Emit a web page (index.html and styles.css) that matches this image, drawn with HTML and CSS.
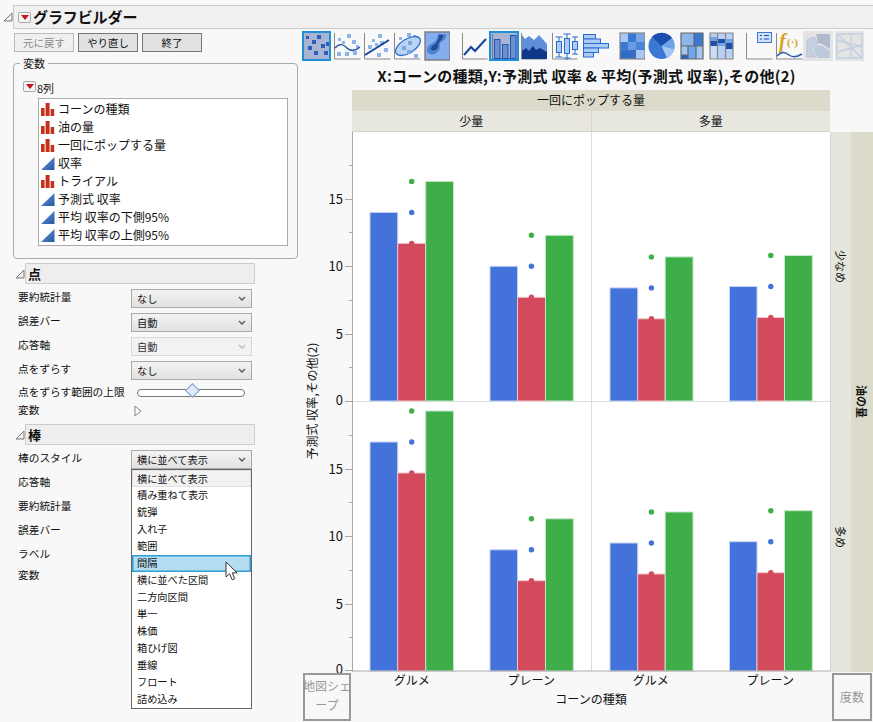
FILE: index.html
```html
<!DOCTYPE html>
<html lang="ja">
<head>
<meta charset="utf-8">
<title>グラフビルダー</title>
<link rel="stylesheet" href="styles.css">
</head>
<body>
<svg class="defs" width="0" height="0" aria-hidden="true">
  <defs>
    <linearGradient id="tri" x1="0" y1="0" x2="1" y2="1"><stop offset="0" stop-color="#6f9ddf"/><stop offset="1" stop-color="#23569f"/></linearGradient>
    <symbol id="nom" viewBox="0 0 14 13"><path d="M0 5h3.600v8H0zM4.600 0h4v13h-4zM9.600 6h3.600v7H9.600z" fill="#c5301a"/></symbol>
    <symbol id="con" viewBox="0 0 14 13"><path d="M13.500 0v13H0z" fill="url(#tri)"/></symbol>
    <symbol id="disc" viewBox="0 0 10 10"><path d="M9 1v8H1z" fill="#efefef" stroke="#777"/></symbol>
    <symbol id="chev" viewBox="0 0 8 5"><path d="M1 1l3 3 3-3" fill="none" stroke="currentColor" stroke-width="1.300"/></symbol>
  </defs>
</svg>

<header class="titlerow">
  <svg class="disc"><use href="#disc"/></svg>
  <div class="titlebar">
    <span class="redbtn"><i></i></span>
    <h1>グラフビルダー</h1>
  </div>
</header>

<div class="app">
  <aside class="left">
    <div class="btns">
      <span class="btn off">元に戻す</span>
      <span class="btn">やり直し</span>
      <span class="btn">終了</span>
    </div>
    <fieldset class="vars">
      <legend>変数</legend>
      <div class="cols"><span class="redbtn small"><i></i></span><span>8列</span></div>
      <ul class="list">
        <li><svg class="ci"><use href="#nom"/></svg>コーンの種類</li>
        <li><svg class="ci"><use href="#nom"/></svg>油の量</li>
        <li><svg class="ci"><use href="#nom"/></svg>一回にポップする量</li>
        <li><svg class="ci"><use href="#con"/></svg>収率</li>
        <li><svg class="ci"><use href="#nom"/></svg>トライアル</li>
        <li><svg class="ci"><use href="#con"/></svg>予測式 収率</li>
        <li><svg class="ci"><use href="#con"/></svg>平均 収率の下側95%</li>
        <li><svg class="ci"><use href="#con"/></svg>平均 収率の上側95%</li>
      </ul>
    </fieldset>

    <div class="sechead first"><svg class="disc"><use href="#disc"/></svg><div class="secbar">点</div></div>
    <div class="row"><label>要約統計量</label><div class="select">なし<svg class="chev"><use href="#chev"/></svg></div></div>
    <div class="row"><label>誤差バー</label><div class="select">自動<svg class="chev"><use href="#chev"/></svg></div></div>
    <div class="row"><label>応答軸</label><div class="select dis">自動<svg class="chev"><use href="#chev"/></svg></div></div>
    <div class="row"><label>点をずらす</label><div class="select">なし<svg class="chev"><use href="#chev"/></svg></div></div>
    <div class="row short low"><label>点をずらす範囲の上限</label><div class="slider"><i class="thumb"></i></div></div>
    <div class="row short"><label>変数</label><svg class="play" viewBox="0 0 8 12"><path d="M1 1l6 5-6 5z" fill="#f8f8f8" stroke="#888"/></svg></div>

    <div class="sechead second"><svg class="disc"><use href="#disc"/></svg><div class="secbar">棒</div></div>
    <div class="row"><label>棒のスタイル</label>
      <div class="select">横に並べて表示<svg class="chev"><use href="#chev"/></svg>
        <ul class="menu">
          <li class="cur">横に並べて表示</li>
          <li>積み重ねて表示</li>
          <li>銃弾</li>
          <li>入れ子</li>
          <li>範囲</li>
          <li class="hov">間隔<svg class="cursor" viewBox="0 0 13 20"><path d="M1 1v15l3.600-3.200 2.600 6 2.600-1.100-2.600-5.800h5z" fill="#fff" stroke="#333"/></svg></li>
          <li>横に並べた区間</li>
          <li>二方向区間</li>
          <li>単一</li>
          <li>株価</li>
          <li>箱ひげ図</li>
          <li>垂線</li>
          <li>フロート</li>
          <li>詰め込み</li>
        </ul>
      </div>
    </div>
    <div class="row"><label>応答軸</label></div>
    <div class="row"><label>要約統計量</label></div>
    <div class="row"><label>誤差バー</label></div>
    <div class="row"><label>ラベル</label></div>
    <div class="row short"><label>変数</label></div>
  </aside>

  <main class="right">
    <div class="toolbar">
      <svg class="t w29" viewBox="0 0 29 30"><rect x="1" y="1" width="27" height="28" fill="#a9b4d0" stroke="#1f8fd6" stroke-width="2"/><g fill="#2a5fc0"><rect x="15" y="4" width="4" height="4"/><rect x="10" y="9" width="4" height="4"/><rect x="19" y="13" width="4" height="4"/><rect x="6" y="15" width="4" height="4"/><rect x="24" y="11" width="3" height="4"/><rect x="12" y="20" width="4" height="4"/><rect x="22" y="20" width="4" height="4"/><rect x="4" y="5" width="3" height="3"/></g></svg>
      <svg class="t w27 ml3" viewBox="0 0 27 30"><path d="M.5 2v26h26" fill="none" stroke="#888"/><g fill="#8fb4e8"><rect x="13" y="3" width="4" height="4"/><rect x="4" y="7" width="3" height="3"/><rect x="18" y="9" width="4" height="4"/><rect x="8" y="10" width="3" height="3"/><rect x="22" y="14" width="3" height="3"/><rect x="3" y="21" width="4" height="4"/><rect x="11" y="21" width="4" height="4"/><rect x="19" y="20" width="4" height="4"/></g><path d="M1 17c5-5 8-4 12 0s8 3 13-1" fill="none" stroke="#2a5aa8" stroke-width="1.500"/></svg>
      <svg class="t w27 ml3" viewBox="0 0 27 30"><path d="M.5 2v26h26" fill="none" stroke="#888"/><g fill="#8fb4e8"><rect x="14" y="3" width="4" height="4"/><rect x="8" y="8" width="3" height="3"/><rect x="16" y="10" width="4" height="4"/><rect x="4" y="14" width="4" height="4"/><rect x="11" y="12" width="3" height="3"/><rect x="20" y="17" width="4" height="4"/><rect x="13" y="22" width="4" height="4"/></g><path d="M1 24L25 9" fill="none" stroke="#12459c" stroke-width="2"/></svg>
      <svg class="t w27 ml3" viewBox="0 0 27 30"><path d="M.5 2v26h26" fill="none" stroke="#888"/><g fill="#8fb4e8"><rect x="13" y="2" width="4" height="4"/><rect x="5" y="6" width="3" height="3"/><rect x="19" y="4" width="3" height="3"/><rect x="5" y="20" width="3" height="3"/><rect x="20" y="23" width="4" height="4"/></g><ellipse cx="14" cy="15" rx="14" ry="7" transform="rotate(-32 14 15)" fill="#bcd3f4" stroke="#2f6fd0" stroke-width="1.300"/><g fill="#7aa6e6"><rect x="8" y="15" width="4" height="4"/><rect x="14" y="10" width="4" height="4"/><rect x="13" y="19" width="4" height="4"/></g></svg>
      <svg class="t w26 ml3" viewBox="0 0 26 30"><rect x="1" y="1" width="25" height="28" fill="#86aeee" stroke="#7a7a7a" stroke-width="1.400"/><path d="M22 3c1 6-3 6-6 9 0 4 0 8-4 10-4 3-9 1-9-3 0-5 4-6 7-8 3-2 4-5 4-8z" fill="#4f82cf"/><path d="M19 4c0 5-3 5-5 9 0 3 0 5-3 6-2 1-5 0-4-2 1-3 4-3 5-5 2-3 3-5 3-8z" fill="#1d4c96"/></svg>

      <svg class="t w26 ml12" viewBox="0 0 26 30"><path d="M.5 2v26h25" fill="none" stroke="#888"/><path d="M2 24l7-8 4 4 11-12" fill="none" stroke="#12459c" stroke-width="2"/></svg>
      <svg class="t w30 ml1" viewBox="0 0 30 30"><rect x="1" y="1" width="28" height="28" fill="#a9b4d0" stroke="#1f8fd6" stroke-width="2"/><path d="M3.500 3v24.500h24" fill="none" stroke="#778"/><g fill="#6b8fd0" stroke="#1f55b5"><rect x="5.500" y="8.500" width="5.500" height="19"/><rect x="13.500" y="13.500" width="5.500" height="14"/><rect x="21.500" y="4.500" width="5.500" height="23"/></g></svg>
      <svg class="t w26 ml2" viewBox="0 0 26 30"><path d="M.5 2v26h25" fill="none" stroke="#888"/><path d="M1 4l3 4 4-3 5 4 5-5 8 9v15H1z" fill="#5f8fd8"/><path d="M1 20l4-3 3 3 4-5 3 4 4-2 7 4v7H1z" fill="#10388a"/></svg>
      <svg class="t w26 ml5" viewBox="0 0 26 30"><path d="M.5 2v26h25" fill="none" stroke="#888"/><g fill="#a9cdf5" stroke="#2a6ad0"><path d="M7 6v20M3.500 6h7M3.500 26h7M15 3v26M11.500 3h7M11.500 27h7M23 6v17M20 6h6M20 23h6" fill="none"/><rect x="4.500" y="10.500" width="5" height="11"/><rect x="12.500" y="7.500" width="5" height="15"/><rect x="20.500" y="10.500" width="5" height="8"/></g></svg>
      <svg class="t w26 ml5" viewBox="0 0 26 30"><g fill="#a9cdf5" stroke="#2a6ad0"><rect x=".5" y="3.500" width="12" height="4.500"/><rect x=".5" y="8" width="17" height="4.500"/><rect x=".5" y="12.500" width="25" height="4.500"/><rect x=".5" y="17" width="15" height="4.500"/><rect x=".5" y="21.500" width="10" height="4.500"/></g></svg>

      <svg class="t w26 ml10" viewBox="0 0 26 30"><rect x="1" y="2" width="25" height="26" fill="#aac8f5"/><rect x="9" y="2" width="8" height="9" fill="#3a78d4"/><rect x="1" y="11" width="8" height="9" fill="#3a78d4"/><rect x="1" y="20" width="8" height="8" fill="#2e6ac8"/><rect x="17" y="2" width="9" height="9" fill="#7aa6e6"/><rect x="9" y="11" width="8" height="8" fill="#6a9ae0"/><rect x="9" y="19" width="8" height="9" fill="#3a6cc4"/><rect x="17" y="11" width="9" height="8" fill="#4a82d8"/><rect x="1" y="2" width="25" height="26" fill="none" stroke="#888" stroke-width="1.200"/></svg>
      <svg class="t w27 ml3" viewBox="0 0 27 30"><circle cx="13.500" cy="15" r="13" fill="#3a78d4"/><path d="M13.500 15L4 6a13 13 0 0 1 20 1z" fill="#1c4fad"/><path d="M13.500 15L24 7a13 13 0 0 1 2 11z" fill="#6ea4e6"/><path d="M13.500 15l12.500 3a13 13 0 0 1-7 9z" fill="#a4c6f2"/></svg>
      <svg class="t w24 ml5" viewBox="0 0 24 30"><rect x="1" y="2" width="22" height="26" fill="#a4c6f2"/><rect x="1" y="2" width="13" height="13" fill="#8fb4e8"/><rect x="14" y="2" width="9" height="13" fill="#3a78d4"/><rect x="8" y="15" width="8" height="13" fill="#6ea4f0"/><rect x="1" y="24" width="7" height="4" fill="#2e62b8"/><path d="M1 2h22v26H1zM14 2v13M1 15h22M8 15v13M16 15v13M1 24h7" fill="none" stroke="#666" stroke-width="1.200"/></svg>
      <svg class="t w25 ml5" viewBox="0 0 25 30"><rect x="1" y="2" width="23" height="26" fill="#b8d0f4"/><rect x="1" y="10" width="7" height="5" fill="#1c4fad"/><rect x="1" y="6" width="7" height="4" fill="#6ea4e6"/><rect x="9" y="8" width="7" height="4" fill="#1c4fad"/><rect x="9" y="12" width="7" height="3" fill="#6ea4e6"/><rect x="17" y="12" width="7" height="6" fill="#1c4fad"/><rect x="17" y="8" width="7" height="4" fill="#6ea4e6"/><rect x="1" y="15" width="7" height="13" fill="#c8dcf8"/><path d="M1 2h23v26H1zM8.500 2v26M16.500 2v26" fill="none" stroke="#888" stroke-width="1.200"/></svg>

      <svg class="t w27 ml12" viewBox="0 0 27 30"><path d="M.5 2v26h26" fill="none" stroke="#888"/><rect x="11.500" y="1.500" width="14" height="10" fill="#cfe0f8" stroke="#3a78d4"/><g fill="#1c4fad"><rect x="14" y="4" width="2" height="1"/><rect x="14" y="7.500" width="2" height="1"/><path d="M18 4h5v1h-5zM18 7.500h5v1h-5z"/></g></svg>
      <svg class="t w27 ml3" viewBox="0 0 27 30"><path d="M.5 2v26h26" fill="none" stroke="#888"/><text class="fx" x="3" y="17">f</text><text class="fxp" x="11" y="15">(·)</text><path d="M1 25c5-5 8-4 12-1s8 2 13-1" fill="none" stroke="#2a5aa8" stroke-width="1.500"/></svg>
      <svg class="t w30" viewBox="0 0 30 30"><rect width="30" height="30" fill="#e4e4e4"/><path d="M4 9l7-3 4 6-7 7 5 7H4z" fill="#c4cfdf" stroke="#b6c2d4"/><path d="M13 3l14 0v15l-8-5-4-1z" fill="#b0bacc"/><path d="M14 14l6 1 7 5v7H15l-5-8z" fill="#bdc9dc"/></svg>
      <svg class="t w29 ml2" viewBox="0 0 29 30"><rect width="29" height="30" fill="#e4e4e4"/><path d="M2 3h25v24H2zM2 3l25 24M2 21l25-7M2 9l25 7M16 3v24" fill="none" stroke="#c2cfe2" stroke-width="1.300"/></svg>
    </div>

    <h2 class="charttitle">X:コーンの種類,Y:予測式 収率 &amp; 平均(予測式 収率),その他(2)</h2>

    <div class="chart">
      <div class="grouphead">一回にポップする量</div>
      <div class="subheads"><span>少量</span><span>多量</span></div>

      <svg class="plot" viewBox="302 132 528 539.500">
        <rect x="352" y="132" width="478" height="539.500" fill="#fff"/>
        <path d="M591.500 132v539M352 401.500h478" stroke="#dcdcdc" fill="none"/>
        <g fill="#4472db" stroke="#c4d2f4">
          <rect x="370" y="212.400" width="27.700" height="188.600"/><rect x="490" y="266.300" width="27.500" height="134.700"/><rect x="610" y="287.900" width="27.700" height="113.100"/><rect x="729.500" y="286.500" width="27.500" height="114.500"/>
          <rect x="370" y="442" width="27.700" height="229"/><rect x="490" y="549.800" width="27.500" height="121.200"/><rect x="610" y="543" width="27.700" height="128"/><rect x="729.500" y="541.700" width="27.500" height="129.300"/>
        </g>
        <g fill="#d34a5c" stroke="#f0c4ca">
          <rect x="397.700" y="243.400" width="28" height="157.600"/><rect x="517.500" y="297.300" width="28" height="103.700"/><rect x="637.700" y="318.800" width="27.500" height="82.200"/><rect x="757" y="317.500" width="27.500" height="83.500"/>
          <rect x="397.700" y="473" width="28" height="198"/><rect x="517.500" y="580.700" width="28" height="90.300"/><rect x="637.700" y="574" width="27.500" height="97"/><rect x="757" y="572.700" width="27.500" height="98.300"/>
        </g>
        <g fill="#3eae49" stroke="#c6e6c9">
          <rect x="425.700" y="181.400" width="27.800" height="219.600"/><rect x="545.500" y="235.300" width="27.800" height="165.700"/><rect x="665.200" y="256.900" width="27.800" height="144.100"/><rect x="784.500" y="255.500" width="27.800" height="145.500"/>
          <rect x="425.700" y="411" width="27.800" height="260"/><rect x="545.500" y="518.800" width="27.800" height="152.200"/><rect x="665.200" y="512" width="27.800" height="159"/><rect x="784.500" y="510.700" width="27.800" height="160.300"/>
        </g>
        <g fill="#4472db">
          <circle cx="411.700" cy="212.400" r="2.700"/><circle cx="531.400" cy="266.300" r="2.700"/><circle cx="651.400" cy="287.900" r="2.700"/><circle cx="770.800" cy="286.500" r="2.700"/>
          <circle cx="411.700" cy="442" r="2.700"/><circle cx="531.400" cy="549.800" r="2.700"/><circle cx="651.400" cy="543" r="2.700"/><circle cx="770.800" cy="541.700" r="2.700"/>
        </g>
        <g fill="#d34a5c">
          <circle cx="411.700" cy="243.400" r="2.700"/><circle cx="531.400" cy="297.300" r="2.700"/><circle cx="651.400" cy="318.800" r="2.700"/><circle cx="770.800" cy="317.500" r="2.700"/>
          <circle cx="411.700" cy="473" r="2.700"/><circle cx="531.400" cy="580.700" r="2.700"/><circle cx="651.400" cy="574" r="2.700"/><circle cx="770.800" cy="572.700" r="2.700"/>
        </g>
        <g fill="#3eae49">
          <circle cx="411.700" cy="181.400" r="2.700"/><circle cx="531.400" cy="235.300" r="2.700"/><circle cx="651.400" cy="256.900" r="2.700"/><circle cx="770.800" cy="255.500" r="2.700"/>
          <circle cx="411.700" cy="411" r="2.700"/><circle cx="531.400" cy="518.800" r="2.700"/><circle cx="651.400" cy="512" r="2.700"/><circle cx="770.800" cy="510.700" r="2.700"/>
        </g>
        <path d="M352.500 132v539.500M352 671h478" stroke="#a8a8a8" fill="none"/>
        <path d="M345 199.500h7M345 266.500h7M345 334.500h7M345 401.500h7M345 469.500h7M345 536.500h7M345 604.500h7M345 670.500h7M349 165.500h3M349 232.500h3M349 300.500h3M349 367.500h3M349 435.500h3M349 502.500h3M349 570.500h3M349 637.500h3" stroke="#a8a8a8" fill="none"/>
        <g class="ticks">
          <text x="343" y="204">15</text><text x="343" y="271">10</text><text x="343" y="339">5</text><text x="343" y="405">0</text>
          <text x="343" y="474">15</text><text x="343" y="541">10</text><text x="343" y="609">5</text><text x="343" y="674">0</text>
        </g>
        <text class="ylabel" transform="translate(317 401) rotate(-90)">予測式 収率,その他(2)</text>
      </svg>

      <div class="strip">
        <div class="stripin"><span>少なめ</span><span>多め</span></div>
        <div class="stripout"><span>油の量</span></div>
      </div>

      <div class="zone map"><span>地図シェ<br>ープ</span></div>
      <div class="xaxis">
        <div class="xticks"><span>グルメ</span><span>プレーン</span><span>グルメ</span><span>プレーン</span></div>
        <div class="xtitle">コーンの種類</div>
      </div>
      <div class="zone freq">度数</div>
    </div>
  </main>
</div>
</body>
</html>
```
FILE: styles.css
```css
* { box-sizing: border-box; }
html, body { margin: 0; padding: 0; }
body {
  width: 873px; height: 722px; overflow: hidden;
  background: #f8f8f8; color: #111;
  font-family: "Noto Sans CJK JP", "Noto Sans", sans-serif;
  font-size: 12px; line-height: 16px;
}
.defs { position: absolute; }
h1, h2, ul, fieldset { margin: 0; padding: 0; }
ul { list-style: none; }

.titlerow { display: flex; align-items: center; height: 30px; padding: 5px 0 1px 3px; }
.disc { width: 10px; height: 10px; flex: none; }
.titlebar {
  flex: 1; height: 24px; display: flex; align-items: center; gap: 2px;
  background: #f0f0f0; border: 1px solid #ccc; border-right: 0; padding-left: 4px;
}
.titlebar h1 { font-size: 15px; line-height: 20px; font-weight: 700; letter-spacing: -.1px; }
.redbtn {
  width: 13px; height: 11px; flex: none; display: flex; align-items: center; justify-content: center;
  background: #f4f4f4; border: 1px solid #aaa; border-radius: 2px;
}
.redbtn i { width: 0; height: 0; border: 4px solid transparent; border-top: 5px solid #c8121e; border-bottom: 0; }

.app { display: grid; grid-template-columns: 302px 571px; height: 692px; }

.btns { display: flex; gap: 4px; margin: 3px 0 0 14px; }
.btn {
  width: 60px; height: 19px; display: flex; align-items: center; justify-content: center;
  background: #e1e1e1; border: 1px solid #777; font-size: 10.5px;
}
.btn.off { background: #f0f0f0; border-color: #bbb; color: #888; }

.vars {
  width: 285px; height: 203px; margin: 4px 0 0 13px; padding: 0;
  border: 1px solid #aaa; border-radius: 4px;
}
.vars legend { margin-left: 6px; padding: 0 3px; height: 14px; line-height: 14px; font-size: 11px; }
.cols { display: flex; align-items: center; gap: 1px; height: 16px; margin: 10px 0 0 9px; font-size: 11px; }
.redbtn.small { margin-top: -4px; }
.list { width: 250px; height: 148px; margin: 2px 0 0 24px; background: #fff; border: 1px solid #aaa; padding-top: 1px; }
.list li { display: flex; align-items: center; height: 18px; padding-left: 2px; white-space: pre; }
.ci { width: 14px; height: 13px; margin-right: 3px; flex: none; }

.sechead { display: flex; align-items: center; margin-left: 15px; height: 21px; }
.sechead.first { margin-top: 4px; }
.sechead.second { margin-top: 4px; }
.secbar {
  width: 230px; height: 21px; line-height: 19px; padding-left: 2px; font-weight: 700; font-size: 13px;
  background: #eee; border: 1px solid #ccc;
}
.row { display: flex; align-items: center; height: 24px; margin-left: 18px; }
.sechead + .row { margin-top: 2px; }
.row.short { height: 18px; }
.row.low { margin-top: 2px; }
.row label { width: 113px; flex: none; white-space: nowrap; margin-top: -2px; font-size: 10.7px; }
.select {
  position: relative; width: 121px; height: 19px; line-height: 18px; padding-left: 5px;
  background: linear-gradient(#f3f3f3, #e2e2e2); border: 1px solid #aaa; color: #111; font-size: 10.2px;
}
.select.dis { background: #f2f2f2; border-color: #d8d8d8; color: #333; }
.select.dis .chev { color: #bbb; }
.chev { position: absolute; right: 5px; top: 6px; width: 8px; height: 5px; color: #555; }
.slider {
  position: relative; width: 108px; height: 8px; margin-left: 6px;
  background: #fff; border: 1px solid #777; border-radius: 4px;
}
.thumb {
  position: absolute; left: 49px; top: -5px; width: 11px; height: 11px; transform: rotate(45deg) scale(.95);
  background: #dfeafa; border: 1px solid #7c9cc4;
}
.play { width: 8px; height: 12px; margin-left: 3px; }

.menu {
  position: absolute; top: 18px; left: -1px; width: 121px; height: 240px; z-index: 5;
  background: #fff; border: 1px solid #666; padding: 0;
}
.menu li { position: relative; height: 17.07px; line-height: 16px; padding-left: 5px; }
.menu .cur { background: #f2f2f2; border: 1px solid #e0e0e0; padding-left: 4px; line-height: 15px; }
.menu .hov { background: #b5ddf2; box-shadow: inset 0 0 0 1.5px #2f9fd8; }
.cursor { position: absolute; left: 93px; top: 6px; width: 13px; height: 20px; overflow: visible; }

.toolbar { display: flex; height: 30px; margin-top: 1px; }
.t { height: 30px; flex: none; display: block; }
.w24 { width: 24px; } .w25 { width: 25px; } .w26 { width: 26px; } .w27 { width: 27px; } .w29 { width: 29px; } .w30 { width: 30px; }
.ml1 { margin-left: 1px; } .ml2 { margin-left: 2px; } .ml3 { margin-left: 3px; } .ml5 { margin-left: 5px; } .ml10 { margin-left: 10px; } .ml12 { margin-left: 12px; }
.fx { font: italic 700 20px "Liberation Serif", serif; fill: #d6a21a; }
.fxp { font: 700 11px "Liberation Serif", serif; fill: #d6a21a; }

.charttitle {
  height: 29px; line-height: 30px; text-align: center; font-size: 15px; font-weight: 700;
  letter-spacing: .3px; padding-right: 2px; white-space: pre;
}

.chart {
  display: grid; grid-template-columns: 50px 478px 43px; grid-template-rows: 21px 21px 539.5px auto;
}
.grouphead { grid-column: 2; grid-row: 1; text-align: center; line-height: 20px; background: #dcdacb; }
.subheads {
  grid-column: 2; grid-row: 2; display: grid; grid-template-columns: 1fr 1fr; background: #d6d4c6; gap: 1px;
  border-bottom: 1px solid #d6d4c6;
}
.subheads span { background: #e7e7df; text-align: center; line-height: 20px; }
.plot { grid-column: 1 / 3; grid-row: 3; width: 528px; height: 539.5px; display: block; overflow: visible; }
.ticks text { font-size: 13px; text-anchor: end; fill: #111; }
.ylabel { font-size: 12px; text-anchor: middle; fill: #111; }

.strip { grid-column: 3; grid-row: 3; display: grid; grid-template-columns: 21px 22px; }
.stripin { display: grid; grid-template-rows: 1fr 1fr; background: #e5e5dd; border-left: 1px solid #d6d4c6; }
.stripin span, .stripout span {
  writing-mode: vertical-rl; text-orientation: sideways; display: flex; align-items: center; justify-content: center;
  font-size: 11px; line-height: 20px;
}
.stripout { display: flex; justify-content: center; background: #dcdacb; }
.stripout span { font-weight: 700; }

.zone {
  text-align: center; color: #999; background: #f8f8f8; border: 2px solid #999; height: 48px;
  display: flex; align-items: center; justify-content: center; line-height: 19px;
}
.map { grid-column: 1; grid-row: 4; width: 48px; margin: 1px 0 0 1px; white-space: nowrap; }
.map span { margin-top: -4px; }
.freq { grid-column: 3; grid-row: 4; width: 40px; margin: 1px 0 0 2px; }
.xaxis { grid-column: 2; grid-row: 4; }
.xticks { display: grid; grid-template-columns: repeat(4, 1fr); text-align: center; height: 17px; }
.xtitle { text-align: center; margin-top: 2px; }
```
